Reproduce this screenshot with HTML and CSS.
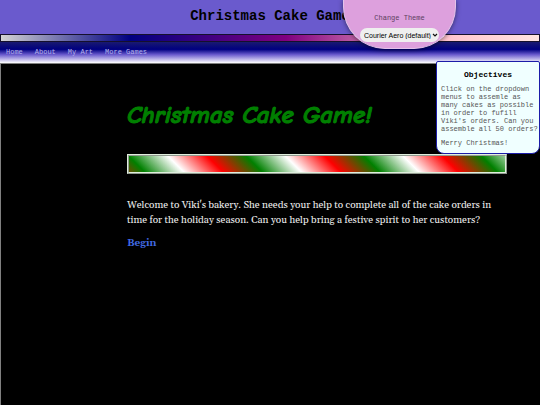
FILE: index.html
```html
<!DOCTYPE html>
<html lang="en">
<head>
<meta charset="UTF-8">
<meta name="viewport" content="width=device-width, initial-scale=1">
<title>Christmas Cake Game</title>
<link rel="stylesheet" href="styles.css">
</head>
<body>

<header>
  <h1>Christmas Cake Game</h1>
</header>
<div class="strip"></div>

<nav>
  <a href="#">Home</a>
  <a href="#">About</a>
  <a href="#">My Art</a>
  <a href="#">More Games</a>
</nav>

<div class="theme">
  <label for="theme">Change Theme</label>
  <div class="picker">
    <select id="theme">
      <option>Courier Aero (default)</option>
    </select>
    <svg class="arrow" viewBox="0 0 6 4"><path d="M1 1l2 2 2-2" fill="none" stroke="#111" stroke-width="1.2"/></svg>
  </div>
</div>

<aside>
  <h3>Objectives</h3>
  <p>Click on the dropdown menus to assemle as many cakes as possible in order to fufill Viki's orders. Can you assemble all 50 orders?</p>
  <p>Merry Christmas!</p>
</aside>

<main>
  <h2>Christmas Cake Game!</h2>
  <div class="ribbon"></div>
  <p>Welcome to Viki's bakery. She needs your help to complete all of the cake orders in time for the holiday season. Can you help bring a festive spirit to her customers?</p>
  <a class="begin" href="#">Begin</a>
</main>

</body>
</html>
```
FILE: styles.css
```css
* {
  box-sizing: border-box;
}
body {
  margin: 0;
  min-height: 100vh;
  display: flex;
  flex-direction: column;
  background: black;
  font-family: "Courier New", "Liberation Mono", monospace;
  font-size: 7px;
}
header {
  background: slateblue;
  padding: 8px 0 10px;
}
h1 {
  margin: 0;
  font-size: 14px;
  line-height: 16px;
  text-align: center;
}
.strip {
  height: 8px;
  border: 1px solid #15102c;
  background: linear-gradient(to right, lightgray, navy 24%, purple 53%, pink 80%, mistyrose);
}
nav {
  display: flex;
  gap: 12px;
  padding: 6px 6px 7px;
  line-height: 8px;
  background: linear-gradient(midnightblue, navy 35%, slateblue 60%, white);
}
nav a {
  color: #b4b2ee;
  text-decoration: none;
}
.theme {
  position: absolute;
  top: 0;
  right: 84px;
  width: 113px;
  padding: 14px 16px 6px;
  background: plum;
  border: 1px solid #e3c3ea;
  border-top: 0;
  border-radius: 0 0 42px 42px;
  box-shadow: 0 1px 5px rgba(0, 0, 0, 0.5);
  text-align: center;
}
.theme label {
  display: block;
  margin-bottom: 6px;
  line-height: 8px;
  color: #5c3f60;
}
.picker {
  position: relative;
}
.picker select {
  display: block;
  width: 100%;
  height: 14px;
  padding: 0 4px;
  appearance: none;
  border: 0;
  border-radius: 7px;
  background: #efefef;
  color: black;
  font-family: "Liberation Sans", Arial, sans-serif;
  font-size: 7px;
}
.arrow {
  position: absolute;
  top: 5px;
  right: 1px;
  width: 6px;
  height: 4px;
}
aside {
  position: absolute;
  top: 61px;
  right: 0;
  width: 104px;
  padding: 9px 0 6px 4px;
  background: azure;
  border: 1px solid #1c1ca8;
  border-radius: 2px 2px 8px 8px;
  line-height: 8px;
  color: #555;
}
aside h3 {
  margin: 0 4px 6px 0;
  font-size: 8px;
  text-align: center;
  color: black;
}
aside p {
  margin: 0 0 6px;
}
aside p:last-child {
  margin: 0;
}
main {
  flex: 1;
  padding: 34px 33px 0 126px;
  border-top: 1px solid gray;
  border-left: 1px solid gray;
  color: #eee;
  font-family: Georgia, Gelasio, "Liberation Serif", serif;
  font-size: 10px;
  line-height: 15px;
}
h2 {
  margin: 0 0 22px;
  font-family: "Comic Sans MS", "Comic Neue", "Open Sans", sans-serif;
  font-size: 25px;
  font-style: italic;
  line-height: 34px;
  color: green;
  -webkit-text-stroke: 1px green;
}
.ribbon {
  height: 20px;
  border: 2px ridge #e0eedd;
  background: repeating-linear-gradient(45deg, red -6%, green 4%, white 14%, red 24%);
}
main p {
  margin: 24px 0 8px;
}
.begin {
  color: royalblue;
  font-weight: bold;
  text-decoration: none;
}
```
